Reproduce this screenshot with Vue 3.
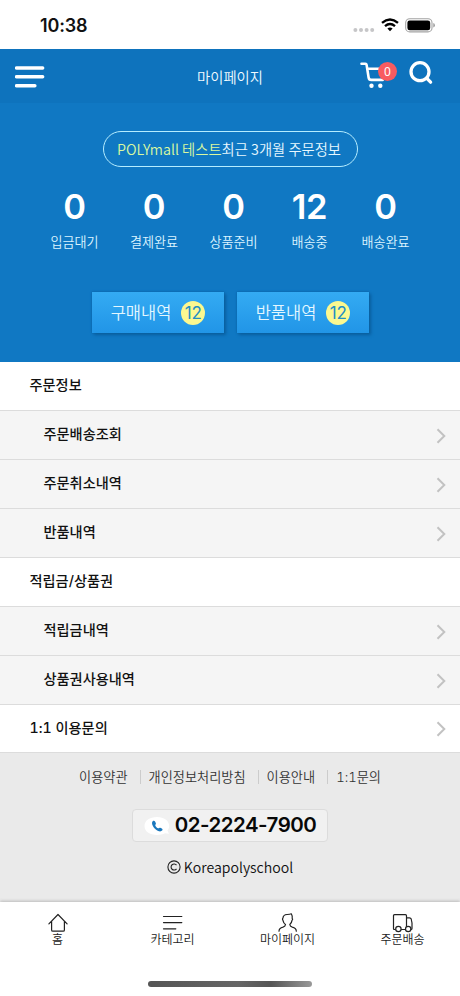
<script setup>
const stats = [
  { value: 0, label: '입금대기', width: 79 },
  { value: 0, label: '결제완료', width: 80 },
  { value: 0, label: '상품준비', width: 79 },
  { value: 12, label: '배송중', width: 73 },
  { value: 0, label: '배송완료', width: 79 },
]
const buttons = [
  { label: '구매내역', count: 12 },
  { label: '반품내역', count: 12 },
]
const rows = [
  { label: '주문정보', kind: 'head' },
  { label: '주문배송조회', kind: 'sub', arrow: true },
  { label: '주문취소내역', kind: 'sub', arrow: true },
  { label: '반품내역', kind: 'sub', arrow: true },
  { label: '적립금/상품권', kind: 'head' },
  { label: '적립금내역', kind: 'sub', arrow: true },
  { label: '상품권사용내역', kind: 'sub', arrow: true },
  { label: '1:1 이용문의', kind: 'head last', arrow: true },
]
const links = ['이용약관', '개인정보처리방침', '이용안내', '1:1문의']
const tabs = [
  { label: '홈', icon: 'home' },
  { label: '카테고리', icon: 'menu' },
  { label: '마이페이지', icon: 'user' },
  { label: '주문배송', icon: 'truck' },
]
</script>

<template>
  <div class="screen">
    <div class="status">
      <span class="time">10:38</span>
      <div class="indicators">
        <svg class="dots" width="22" height="6" viewBox="0 0 22 6" fill="#c6c6c8">
          <circle cx="2.4" cy="3" r="2" /><circle cx="8" cy="3" r="2" /><circle cx="13.6" cy="3" r="2" /><circle cx="19.2" cy="3" r="2" />
        </svg>
        <svg class="wifi" width="18" height="14" viewBox="0 0 18 14" fill="none" stroke="#000" stroke-width="2.4">
          <path d="M1 4.9Q9-1.9 17 4.9" /><path d="M4 8.2Q9 4 14 8.2" />
          <path d="M6.4 10.5Q9 8.4 11.6 10.5L9 13.2Z" fill="#000" stroke="none" />
        </svg>
        <svg class="battery" width="31" height="15" viewBox="0 0 31 15">
          <rect x=".7" y=".7" width="26.3" height="13.2" rx="4" fill="#fff" stroke="#a3a3a3" stroke-width="1.1" />
          <rect x="2.4" y="2.4" width="22.8" height="9.8" rx="2.3" />
          <path d="M28.3 5v4.6q1.6-.6 1.6-2.3T28.3 5Z" fill="#999" />
        </svg>
      </div>
    </div>

    <header class="topbar">
      <svg class="burger" width="30" height="22" viewBox="0 0 30 22" stroke="#fff" stroke-width="3.4" stroke-linecap="round">
        <path d="M1.5 2h26.2M1.5 10.8h26.2M1.5 19.7h18.4" />
      </svg>
      <h1>마이페이지</h1>
      <div class="actions">
        <div class="cart">
          <svg width="30" height="28" viewBox="0 0 30 28" fill="none" stroke="#fff" stroke-width="2.6" stroke-linecap="round" stroke-linejoin="round">
            <path d="M1.500 2.700h3.900c.8 0 1.100.5 1.200 1.200L8.600 16.500c.2 1.600 1 2.400 2.700 2.400h11.400M7.500 7.800H25l-2 8.100" />
            <circle cx="11.500" cy="24.800" r="2.200" fill="#fff" stroke="none" /><circle cx="20.300" cy="24.800" r="2.200" fill="#fff" stroke="none" />
          </svg>
          <span class="cart-count">0</span>
        </div>
        <svg class="search" width="24" height="24" viewBox="0 0 24 24" fill="none" stroke="#fff" stroke-width="3.300" stroke-linecap="round">
          <circle cx="11" cy="10.700" r="9" /><path d="m17.600 17.200 4 4" />
        </svg>
      </div>
    </header>

    <section class="summary">
      <div class="pill"><em>POLYmall 테스트</em>최근 3개월 주문정보</div>
      <div class="stats">
        <div v-for="s in stats" :key="s.label" class="stat" :style="{ width: s.width + 'px' }">
          <strong>{{ s.value }}</strong>
          <span>{{ s.label }}</span>
        </div>
      </div>
      <div class="buttons">
        <button v-for="b in buttons" :key="b.label" type="button">{{ b.label }}<i>{{ b.count }}</i></button>
      </div>
    </section>

    <nav class="list">
      <a v-for="(r, i) in rows" :key="i" class="row" :class="r.kind">
        <span>{{ r.label }}</span>
        <svg v-if="r.arrow" width="10" height="16" viewBox="0 0 10 16" fill="none" stroke="#c2c2c2" stroke-width="2">
          <path d="m1.500 1.200 6.800 6.800-6.800 6.800" />
        </svg>
      </a>
    </nav>

    <footer class="footer">
      <div class="links"><a v-for="l in links" :key="l">{{ l }}</a></div>
      <div class="phone">
        <svg width="26" height="20" viewBox="0 0 26 20">
          <path d="M13 1C5.500 1 .5 4.800.5 10S5.500 19 13 19c3 0 6-.6 8-1.700l4 .5-1.600-3.400c1.300-1.300 1.800-2.800 1.800-4.400C25.200 4.800 20 1 13 1Z" fill="#fff" />
          <path d="M8.700 5.200c1-1 2-.4 2.500.6l.7 1.500c.3.800-.9 1.500-.6 2.100.6 1.300 1.600 2.300 2.900 2.900.7.300 1.300-.9 2.100-.6l1.500.8c.9.500 1 1.400.3 2.100-1.200 1.300-3.500 1.100-6-.8-3.100-2.400-5.200-6.800-3.400-8.600Z" fill="#1b78bd" />
        </svg>
        <span>02-2224-7900</span>
      </div>
      <div class="copyright">
        <svg width="14" height="14" viewBox="0 0 14 14" fill="none" stroke="#222" stroke-width="1.100">
          <circle cx="7" cy="7" r="6.100" /><path d="M9.500 5.200A3 3 0 1 0 9.500 8.800" />
        </svg>
        <span>Koreapolyschool</span>
      </div>
    </footer>

    <nav class="tabs">
      <a v-for="t in tabs" :key="t.label" class="tab">
        <svg width="22" height="20" viewBox="0 0 22 20" fill="none" stroke="#222" stroke-width="1.200" stroke-linejoin="round" stroke-linecap="round">
          <path v-if="t.icon === 'home'" d="M1.900 10.800 11 1.500l9.100 9.300M4.600 8.300v8.600q0 1.300 1.300 1.300h10.200q1.300 0 1.300-1.300V8.300" />
          <path v-else-if="t.icon === 'menu'" d="M1.500 3.500h18.300M1.500 9.600h18.300M1.500 15.800h12.300" />
          <path v-else-if="t.icon === 'user'" d="M2 18.200c0-2.700 1.500-3.500 4-4.100 1.500-.4 2.400-1.100 2.500-2.600C6.300 10 6.200 8.200 5.900 7c-.6-.3-.5-1.500.1-2C6.200 2.300 8.200 1.600 10 1.500c1.300-.1 2.900-.2 4.300-.7.900 1.600 1.400 3.100.9 4.700.8.500.3 1.300-.1 1.700-.2 1.500-.9 3.100-2.300 4.300.1 1.500 1 2.200 2.500 2.600 2.500.6 4 1.400 4 4.100" />
          <template v-else>
            <path d="M3.700 16.500H2.500q-1 0-1-1V2.700q0-1 1-1h11q1 0 1 1v13.800H9.200M14.500 4.800h3q1.300 0 1.700 1.200l.8 4v5.500q0 1-1 1h-.4" />
            <circle cx="6.400" cy="16" r="2.700" fill="#fff" /><circle cx="16.200" cy="16" r="2.700" fill="#fff" />
          </template>
        </svg>
        <span>{{ t.label }}</span>
      </a>
      <div class="home-indicator"></div>
    </nav>
  </div>
</template>

<style>
body { margin: 0; background: #fff; }
</style>

<style scoped>
* { box-sizing: border-box; }
.screen {
  width: 460px; height: 996px; display: flex; flex-direction: column; overflow: hidden;
  font-family: "Noto Sans CJK KR", sans-serif; color: #111; background: #fff;
}
.status { height: 49px; display: flex; justify-content: space-between; padding: 0 24px 0 40px; }
.time { font: 600 18px/22px Inter, sans-serif; margin-top: 15px; letter-spacing: -.15px; }
.indicators { display: flex; align-items: flex-start; }
.dots { margin: 27px 6px 0 0; }
.wifi { margin: 18px 6px 0 0; }
.battery { margin: 18px 0 0; }
.topbar { height: 54px; flex: none; background: #0e73bd; display: grid; grid-template-columns: 1fr auto 1fr; align-items: start; padding: 0 27px 0 15px; }
.burger { margin-top: 17px; }
h1 { margin: 17px 0 0 12px; font-size: 14.300px; line-height: 21px; font-weight: 350; color: #f1faff; }
.actions { display: flex; justify-content: flex-end; }
.cart { position: relative; margin: 12px 19px 0 0; }
.cart svg { display: block; }
.cart-count { position: absolute; left: 18px; top: 1px; width: 19px; height: 19px; border-radius: 50%; background: #f85b60; color: #fff; font: 12px/20px "Noto Sans", sans-serif; text-align: center; }
.search { margin: 12px 0 0; }
.summary { height: 259px; flex: none; background: #1078c3; display: flex; flex-direction: column; align-items: center; color: #fff; }
.pill { width: 255px; height: 36px; margin: 28px 0 0; border: 1.500px solid #b5edff; border-radius: 18px; text-align: center; font-size: 14.300px; line-height: 33px; font-weight: 350; color: #e8f8ff; white-space: nowrap; padding-right: 2px; }
.pill em { font-style: normal; color: #d9f9a0; }
.stats { display: flex; margin: 18px 0 0; }
.stat { display: flex; flex-direction: column; align-items: center; }
.stat strong { font: 600 34.500px/44px Inter, sans-serif; letter-spacing: -.3px; }
.stat span { margin-top: 3px; font-size: 13.100px; line-height: 20px; font-weight: 350; color: #dcf4ff; }
.buttons { display: flex; gap: 13px; margin: 40px 0 0 1px; }
button { width: 132px; height: 41px; padding: 0 0 1px; border: 0; display: flex; align-items: center; justify-content: center; gap: 10px; font: 350 16.500px/24px "Noto Sans CJK KR", sans-serif; color: #e4f7ff; background: linear-gradient(#34abf3, #2195e7); box-shadow: 0 0 2px #075d9e, 2px 2px 3px #0b609f; }
button i { width: 24px; height: 24px; margin-top: 2px; border-radius: 50%; background: #fbf890; color: #238fc4; font: 400 17px/25px Inter, sans-serif; text-align: center; }
.list { flex: none; display: flex; flex-direction: column; }
.row { height: 49px; display: flex; align-items: center; justify-content: space-between; padding: 0 14px 2px 29.500px; border-bottom: 1px solid #dcdcdc; font-family: Inter, "Noto Sans CJK KR", sans-serif; font-size: 14.200px; font-variant-numeric: tabular-nums; line-height: 22px; font-weight: 500; background: #fff; }
.row svg { margin-top: 3px; }
.row.sub { padding-left: 43.500px; background: #f5f5f5; }
.row.last { height: 48px; }
.footer { height: 149px; flex: none; background: #eaeaea; display: flex; flex-direction: column; align-items: center; }
.links { display: flex; margin-top: 14px; align-items: center; font-family: Inter, "Noto Sans CJK KR", sans-serif; font-size: 13.200px; font-variant-numeric: tabular-nums; line-height: 20px; font-weight: 350; color: #333; }
.links a + a { position: relative; margin-left: 12px; padding-left: 9px; }
.links a + a::before { content: ""; position: absolute; left: 0; top: 3px; height: 14px; width: 1px; background: #ccc; }
.phone { width: 196px; height: 33px; margin-top: 22px; border: 1px solid #dcdcdc; border-radius: 4px; background: #f1f1f1; display: flex; align-items: center; justify-content: center; gap: 5px; font: 600 20.500px/29px Inter, sans-serif; color: #080808; }
.phone span { margin-top: -2px; letter-spacing: -.5px; }
.copyright { display: flex; align-items: center; gap: 3px; margin-top: 14px; font-size: 14.100px; line-height: 22px; font-weight: 350; color: #111; }
.tabs { height: 94px; position: relative; display: grid; grid-template-columns: repeat(4, 1fr); background: #fff; box-shadow: 0 -1px 3px #bbb; }
.tab { display: flex; flex-direction: column; align-items: center; padding-top: 11px; }
.tab span { font-size: 12px; line-height: 18px; margin-top: -3px; font-weight: 350; color: #222; }
.home-indicator { position: absolute; left: 148px; top: 79px; width: 164px; height: 6px; border-radius: 3px; background: linear-gradient(90deg, #555, #666 55%, #555 75%, #999); }
</style>
